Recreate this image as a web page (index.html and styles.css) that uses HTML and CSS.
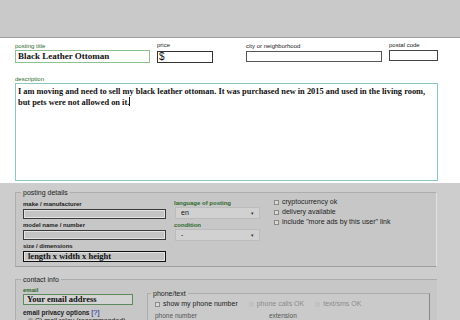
FILE: index.html
```html
<!DOCTYPE html>
<html lang="en">
<head>
    <meta charset="UTF-8">
    <title>create posting</title>
    <link rel="stylesheet" href="styles.css">
</head>
<body>
    <div class="topbar"></div>

    <div class="main">
        <div class="row">
            <div class="field f-title">
                <span class="lbl green">posting title</span>
                <div class="box title-box">Black Leather Ottoman</div>
            </div>
            <div class="field f-price">
                <span class="lbl">price</span>
                <div class="box price-box">$</div>
            </div>
            <div class="field f-city">
                <span class="lbl">city or neighborhood</span>
                <div class="box city-box"></div>
            </div>
            <div class="field f-postal">
                <span class="lbl">postal code</span>
                <div class="box postal-box"></div>
            </div>
        </div>

        <div class="field f-desc">
            <span class="lbl green">description</span>
            <div class="box desc-box">I am moving and need to sell my black leather ottoman. It was purchased new in 2015 and used in the living room, but pets were not allowed on it.<span class="caret"></span></div>
        </div>
    </div>

    <div class="lower">
        <fieldset class="group details">
            <legend>posting details</legend>
            <div class="cols">
                <div class="col col-a">
                    <span class="lbl bold">make / manufacturer</span>
                    <div class="box gray-box"></div>
                    <span class="lbl bold">model name / number</span>
                    <div class="box gray-box"></div>
                    <span class="lbl bold">size / dimensions</span>
                    <div class="box gray-box size-box">length x width x height</div>
                </div>
                <div class="col col-b">
                    <span class="lbl green bold">language of posting</span>
                    <div class="select">en<span class="arrow">&#9662;</span></div>
                    <span class="lbl green bold">condition</span>
                    <div class="select">-<span class="arrow">&#9662;</span></div>
                </div>
                <div class="col col-c">
                    <div class="check"><span class="cb"></span>cryptocurrency ok</div>
                    <div class="check"><span class="cb"></span>delivery available</div>
                    <div class="check"><span class="cb"></span>include "more ads by this user" link</div>
                </div>
            </div>
        </fieldset>

        <fieldset class="group contact">
            <legend>contact info</legend>
            <div class="cols">
                <div class="col col-email">
                    <span class="lbl green bold">email</span>
                    <div class="box email-box">Your email address</div>
                    <span class="lbl bold privacy">email privacy options <a class="help">[?]</a></span>
                    <div class="radio"><span class="rb"></span>C) mail relay (recommended)</div>
                </div>
                <fieldset class="group phone">
                    <legend>phone/text</legend>
                    <div class="phone-row">
                        <div class="check big"><span class="cb"></span>show my phone number</div>
                        <div class="check big off"><span class="cb"></span>phone calls OK</div>
                        <div class="check big off"><span class="cb"></span>text/sms OK</div>
                    </div>
                    <div class="phone-row labels">
                        <span class="lbl faint">phone number</span>
                        <span class="lbl faint ext">extension</span>
                    </div>
                </fieldset>
            </div>
        </fieldset>
    </div>
</body>
</html>
```

FILE: styles.css
```css
*{
    margin: 0;
    padding: 0;
    box-sizing: border-box;
}
body{
    width: 460px;
    height: 320px;
    overflow: hidden;
    background: #fff;
    font-family: 'Liberation Sans', Arial, sans-serif;
    color: #222;
}
.topbar{
    height: 38px;
    background: #c9c9c9;
    border-bottom: 1px solid #9d9d9d;
}

/* ---------- top white part ---------- */
.main{
    height: 145px;
    padding: 4px 0 0 15px;
}
.row{
    display: flex;
    align-items: flex-start;
}
.field{
    display: flex;
    flex-direction: column;
}
.lbl{
    display: block;
    font-size: 6px;
    line-height: 7px;
    white-space: nowrap;
}
.green{
    color: #2e6a2e;
}
.bold{
    font-weight: bold;
}
.box{
    font-family: 'Liberation Serif', 'Times New Roman', serif;
    font-weight: bold;
    color: #111;
}
.f-title .lbl{
    margin-top: 1px;
}
.title-box{
    width: 135px;
    height: 13px;
    border: 1px solid #8fc08f;
    font-size: 9px;
    line-height: 11px;
    padding-left: 2px;
}
.f-price{
    margin-left: 7px;
}
.price-box{
    width: 56px;
    height: 12px;
    margin-top: 2px;
    border: 1px solid #333;
    font-family: 'Liberation Sans', Arial, sans-serif;
    font-weight: normal;
    font-size: 10px;
    line-height: 10px;
    padding-left: 1px;
}
.f-city{
    margin-left: 33px;
}
.f-city .lbl{
    margin-top: 1px;
}
.city-box{
    width: 136px;
    height: 11px;
    margin-top: 1px;
    border: 1px solid #555;
}
.f-postal{
    margin-left: 7px;
}
.postal-box{
    width: 49px;
    height: 11px;
    margin-top: 1px;
    border: 1px solid #444;
}
.f-desc{
    margin-top: 13px;
}
.desc-box{
    width: 423px;
    height: 98px;
    border: 1px solid #8ac6c4;
    font-size: 8.4px;
    line-height: 11px;
    padding: 2px 2px 0 2px;
}
.caret{
    display: inline-block;
    width: 1px;
    height: 9px;
    background: #111;
    vertical-align: -1px;
}

/* ---------- gray lower part ---------- */
.lower{
    height: 137px;
    background: #cdcdcd;
    padding: 6px 0 0 15px;
}
.group{
    border: 1px solid #adadad;
    border-right-color: #e2e2e2;
    background: #c7c7c7;
    min-width: 0;
}
.group legend{
    font-size: 7px;
    line-height: 7px;
    color: #222;
    margin-left: 5px;
    padding: 0 2px;
}
.details{
    width: 422px;
    height: 78px;
    border-bottom-color: #9e9e9e;
}
.cols{
    display: flex;
    align-items: flex-start;
}
.col{
    display: flex;
    flex-direction: column;
}
.col-a{
    margin: 5px 0 0 7px;
    width: 143px;
}
.col-a .lbl{
    margin-bottom: 1px;
}
.gray-box{
    height: 10px;
    border: 1px solid #3a3a3a;
    background: #c4c4c4;
    box-shadow: inset 0 0 0 1px #e3e3e3;
    margin-bottom: 3px;
    font-size: 8.5px;
    line-height: 8px;
    padding-left: 4px;
}
.size-box{
    height: 11px;
    border-width: 1.5px;
    border-color: #111;
}
.col-b{
    margin: 4px 0 0 8px;
    width: 85px;
}
.select{
    position: relative;
    height: 12px;
    width: 85px;
    margin: 0 0 3px 1px;
    background: #d1d1d1;
    border: 1px solid #bcbcbc;
    font-size: 7px;
    line-height: 10px;
    padding-left: 5px;
    color: #111;
}
.arrow{
    position: absolute;
    right: 5px;
    top: 0;
    font-size: 5px;
    color: #333;
}
.col-c{
    margin: 1px 0 0 15px;
}
.check{
    display: flex;
    align-items: center;
    font-size: 7px;
    line-height: 10px;
    color: #222;
    white-space: nowrap;
}
.cb{
    width: 5px;
    height: 5px;
    border: 1px solid #8a8a8a;
    background: #dadada;
    margin-right: 3px;
}
.contact{
    width: 422px;
    margin-top: 9px;
    height: 60px;
    border-right: none;
    border-bottom: none;
}
.col-email{
    margin: 4px 0 0 7px;
    width: 110px;
}
.email-box{
    height: 11px;
    width: 110px;
    border: 1.5px solid #5c8a5c;
    background: #d3d3d3;
    font-size: 8.5px;
    line-height: 8px;
    padding-left: 3px;
    margin-bottom: 4px;
}
.privacy{
    font-size: 6.5px;
}
.help{
    color: #1a2a9a;
    font-size: 7.5px;
    font-weight: normal;
}
.radio{
    font-size: 7px;
    line-height: 9px;
    padding-left: 5px;
    white-space: nowrap;
}
.rb{
    display: inline-block;
    width: 5px;
    height: 5px;
    border-radius: 50%;
    background: #999;
    margin-right: 2px;
}
.phone{
    width: 283px;
    height: 40px;
    margin: 7px 0 0 14px;
    border-bottom: none;
    border-right-color: #888;
    background: #cacaca;
}
.phone legend{
    margin-left: 3px;
    padding: 0 2px;
}
.phone-row{
    display: flex;
    margin: 2px 0 0 7px;
}
.check.big{
    font-size: 7px;
    margin-right: 11px;
}
.check.off{
    color: #8a8a8a;
}
.check.off .cb{
    border-color: #c2c2c2;
    background: #c2c2c2;
}
.phone-row.labels{
    margin-top: 3px;
}
.faint{
    color: #555;
    font-size: 6.5px;
}
.ext{
    margin-left: 72px;
}
```
